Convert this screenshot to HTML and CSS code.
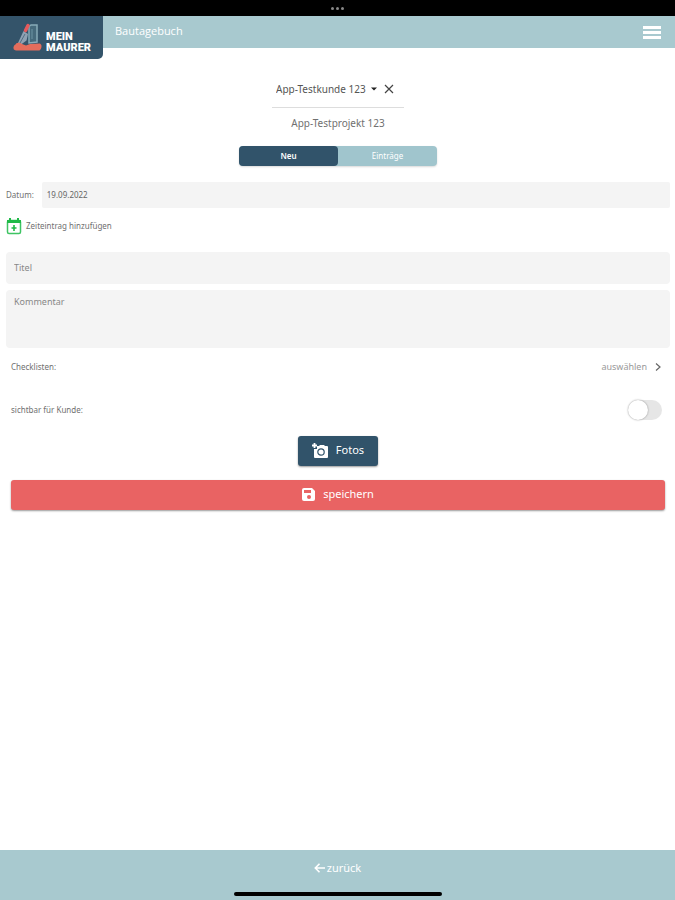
FILE: index.html
```html
<!DOCTYPE html>
<html lang="de">
<head>
    <meta charset="UTF-8">
    <meta name="viewport" content="width=device-width, initial-scale=1.0">
    <title>Bautagebuch</title>
    <link rel="stylesheet" href="styles.css">
</head>
<body>
    <div class="status-bar">
        <span class="dot"></span><span class="dot"></span><span class="dot"></span>
    </div>

    <!-- Header -->
    <header class="header">
        <div class="logo">
            <svg class="logo-icon" viewBox="0 0 30 28" aria-hidden="true">
                <path d="M16 3.500 18 2h6v17l-8 1z" fill="#466a7c" stroke="#86aab8" stroke-width="1.500"/>
                <path d="M19 6v10" stroke="#6d94a4" stroke-width="1"/>
                <path d="M10.500 8 5 20l3 1.500 5.500-4L15 11z" fill="#8fa2b3"/>
                <path d="M7 20l5-9" stroke="#536f84" stroke-width="1"/>
                <path d="M12.500 7.500 15 2.500" stroke="#e65a5c" stroke-width="3.500" stroke-linecap="round"/>
                <path d="M3 20.500q3-1.500 6 .5l4 1.500 4-1.500 10-.5q2 1 1.500 3.500-.5 3-2 3.500H3q-3-.5-2.500-3.500.5-2 2.500-3z" fill="#e46d5c"/>
            </svg>
            <div class="logo-text">
                <span>MEIN</span>
                <span>MAURER</span>
            </div>
        </div>
        <h1 class="title">Bautagebuch</h1>
        <button class="menu-btn" type="button" aria-label="Menü">
            <span></span><span></span><span></span>
        </button>
    </header>

    <main class="content">
        <!-- Kunde und Projekt -->
        <div class="customer">
            <select class="customer-select" aria-label="Kunde">
                <option>App-Testkunde 123</option>
            </select>
            <svg class="caret" viewBox="0 0 6 4" aria-hidden="true"><path d="M0 .5h6L3 3.500z"/></svg>
            <button class="clear-btn" type="button" aria-label="Kunde entfernen">
                <svg viewBox="0 0 10 10"><path d="M1 1l8 8M9 1 1 9" stroke="#444" stroke-width="1.200"/></svg>
            </button>
        </div>
        <p class="project">App-Testprojekt 123</p>

        <div class="tabs">
            <button class="tab active" type="button">Neu</button>
            <button class="tab" type="button">Einträge</button>
        </div>

        <form class="entry-form">
            <div class="date-row">
                <label for="datum">Datum:</label>
                <input class="field date" id="datum" type="text" value="19.09.2022">
            </div>

            <button class="time-btn" type="button">
                <svg viewBox="0 0 16 17" aria-hidden="true">
                    <rect x="1.500" y="2.500" width="13" height="13" rx="1.500" fill="#fff" stroke="#3fc463" stroke-width="1.500"/>
                    <path d="M1 2h14v3H1zM3 0h2v3H3zM11 0h2v3h-2z" fill="#20ba48"/>
                    <path d="M8 7v6M5.500 10h5" stroke="#20ba48" stroke-width="1.600"/>
                </svg>
                Zeiteintrag hinzufügen
            </button>

            <input class="field subject" type="text" placeholder="Titel" aria-label="Titel">
            <textarea class="field comment" placeholder="Kommentar" aria-label="Kommentar"></textarea>

            <div class="row">
                <span>Checklisten:</span>
                <button class="select-btn" type="button">
                    auswählen
                    <svg viewBox="0 0 6 8" aria-hidden="true"><path d="M1 .5 5 4 1 7.500" fill="none" stroke="#666" stroke-width="1.200"/></svg>
                </button>
            </div>
            <div class="row switch-row">
                <label for="sichtbar">sichtbar für Kunde:</label>
                <input class="switch" id="sichtbar" type="checkbox">
            </div>

            <button class="btn photo-btn" type="button">
                <svg viewBox="0 0 16 15" aria-hidden="true">
                    <path d="M5 3h2l1-1h4l1 1h2q1 0 1 1v10q0 1-1 1H3q-1 0-1-1V6h3z" fill="#fff"/>
                    <path d="M2.500 0v5M0 2.500h5" stroke="#fff" stroke-width="1.800"/>
                    <circle cx="9" cy="9" r="3.200" fill="#fff" stroke="#31536a" stroke-width="1.200"/>
                </svg>
                Fotos
            </button>
            <button class="btn save-btn" type="submit">
                <svg viewBox="0 0 13 13" aria-hidden="true">
                    <path d="M2 0h8l3 3v8q0 2-2 2H2q-2 0-2-2V2q0-2 2-2z" fill="#fff"/>
                    <path d="M2 2h7v3H2z" fill="#e96363"/>
                    <circle cx="7" cy="9" r="2" fill="#e96363"/>
                </svg>
                speichern
            </button>
        </form>
    </main>

    <!-- Footer -->
    <footer class="footer">
        <a class="back" href="#">
            <svg viewBox="0 0 11 10" aria-hidden="true"><path d="M5.500.8 1.300 5l4.200 4.200M1.300 5H11" fill="none" stroke="#fff" stroke-width="1.600"/></svg>
            zurück
        </a>
        <div class="home-bar"></div>
    </footer>
</body>
</html>
```

FILE: styles.css
```css
* {
    box-sizing: border-box;
}

body {
    margin: 0;
    min-height: 100vh;
    display: flex;
    flex-direction: column;
    background: #fff;
    color: #707070;
    font-family: "Noto Sans", sans-serif;
    font-size: 8px;
    line-height: 12px;
}

button, input, textarea, select {
    font: inherit;
    color: inherit;
    border: none;
    background: none;
    padding: 0;
    margin: 0;
}

button {
    cursor: pointer;
}

.status-bar {
    height: 16px;
    background: #000;
    display: flex;
    align-items: center;
    justify-content: center;
    gap: 2px;
}

.dot {
    width: 3px;
    height: 3px;
    border-radius: 50%;
    background: #888;
}

.header {
    height: 32px;
    background: #a8c9cf;
    display: flex;
    align-items: flex-start;
}

.logo {
    width: 103px;
    height: 43px;
    padding: 6px 10px 0 13px;
    background: #34546a;
    border-bottom-right-radius: 5px;
    display: flex;
    gap: 3px;
}

.logo-icon {
    width: 30px;
    height: 30px;
    flex: none;
}

.logo-text {
    padding-top: 9px;
    color: #fff;
    font-family: Roboto, sans-serif;
    font-size: 11px;
    line-height: 11px;
    font-weight: 900;
    display: flex;
    flex-direction: column;
}

.title {
    flex: 1;
    margin: 0 0 0 12px;
    color: #fff;
    font-family: "Open Sans", sans-serif;
    font-size: 11px;
    line-height: 30px;
    font-weight: 400;
}

.menu-btn {
    width: 18px;
    height: 32px;
    margin-right: 14px;
    display: flex;
    flex-direction: column;
    justify-content: center;
    gap: 2px;
}

.menu-btn span {
    height: 3px;
    background: #fff;
}

.content {
    flex: 1;
    padding: 24px 5px 0 6px;
    display: flex;
    flex-direction: column;
    align-items: center;
}

.customer {
    height: 36px;
    padding: 0 10px 2px 4px;
    border-bottom: 1px solid #ddd;
    display: flex;
    align-items: center;
    font-size: 10px;
}

.customer-select {
    appearance: none;
    color: #555;
}

.caret {
    width: 6px;
    height: 4px;
    margin: 0 7px 0 5px;
    fill: #222;
}

.clear-btn {
    width: 10px;
    height: 10px;
    display: flex;
}

.project {
    margin: 7px 0 15px;
    font-size: 10px;
    line-height: 16px;
}

.tabs {
    width: 198px;
    height: 20px;
    display: flex;
    background: #a0c5cd;
    border-radius: 4px;
    box-shadow: 0 1px 2px rgba(0, 0, 0, 0.15);
}

.tab {
    flex: 1;
    color: #fff;
    border-radius: 4px;
}

.tab.active {
    background: #31536a;
    font-weight: 600;
}

.entry-form {
    width: 100%;
    margin-top: 16px;
    display: flex;
    flex-direction: column;
}

.field {
    width: 100%;
    background: #f4f4f4;
    border-radius: 4px;
    resize: none;
}

.field::placeholder {
    color: #888;
    opacity: 1;
}

.date-row {
    display: flex;
    align-items: center;
    gap: 8px;
}

.date {
    flex: 1;
    height: 26px;
    padding: 0 5px 2px;
    border-radius: 2px;
    color: #666;
}

.time-btn {
    align-self: flex-start;
    margin: 9px 0 17px;
    height: 18px;
    display: flex;
    align-items: center;
    gap: 4px;
}

.time-btn svg {
    width: 16px;
    height: 17px;
}

.subject {
    height: 32px;
    padding: 0 8px 2px;
    font-size: 9px;
}

.comment {
    height: 58px;
    margin-top: 6px;
    padding: 6px 8px;
    font-size: 9px;
}

.row {
    height: 38px;
    padding: 0 9px 0 5px;
    display: flex;
    align-items: center;
    justify-content: space-between;
}

.select-btn {
    color: #999;
    font-size: 9px;
    display: flex;
    align-items: center;
    gap: 8px;
}

.select-btn svg {
    width: 6px;
    height: 8px;
}

.switch-row {
    height: 50px;
    padding: 0 8px 2px 5px;
}

.switch {
    appearance: none;
    width: 34px;
    height: 20px;
    border-radius: 10px;
    background: #e6e6e6;
    cursor: pointer;
}

.switch::before {
    content: "";
    display: block;
    width: 20px;
    height: 20px;
    border-radius: 50%;
    background: #fff;
    box-shadow: 0 0 2px rgba(0, 0, 0, 0.4);
}

.switch:checked {
    background: #a0c5cd;
}

.switch:checked::before {
    margin-left: auto;
}

.btn {
    height: 30px;
    padding: 0 14px 2px;
    color: #fff;
    font-size: 11px;
    border-radius: 3px;
    box-shadow: 0 1px 2px rgba(0, 0, 0, 0.4);
    display: flex;
    align-items: center;
    justify-content: center;
    gap: 8px;
}

.photo-btn {
    align-self: center;
    background: #31536a;
}

.photo-btn svg {
    width: 16px;
    height: 15px;
}

.save-btn {
    margin: 14px 5px 0;
    background: #e96363;
}

.save-btn svg {
    width: 13px;
    height: 13px;
}

.footer {
    height: 50px;
    padding: 10px 0 4px;
    background: #a8c9cf;
    display: flex;
    flex-direction: column;
    align-items: center;
    justify-content: space-between;
}

.back {
    color: #fff;
    font-size: 11px;
    line-height: 16px;
    text-decoration: none;
    display: flex;
    align-items: center;
    gap: 2px;
}

.back svg {
    width: 11px;
    height: 10px;
}

.home-bar {
    width: 208px;
    height: 4px;
    border-radius: 2px;
    background: #000;
}
```
